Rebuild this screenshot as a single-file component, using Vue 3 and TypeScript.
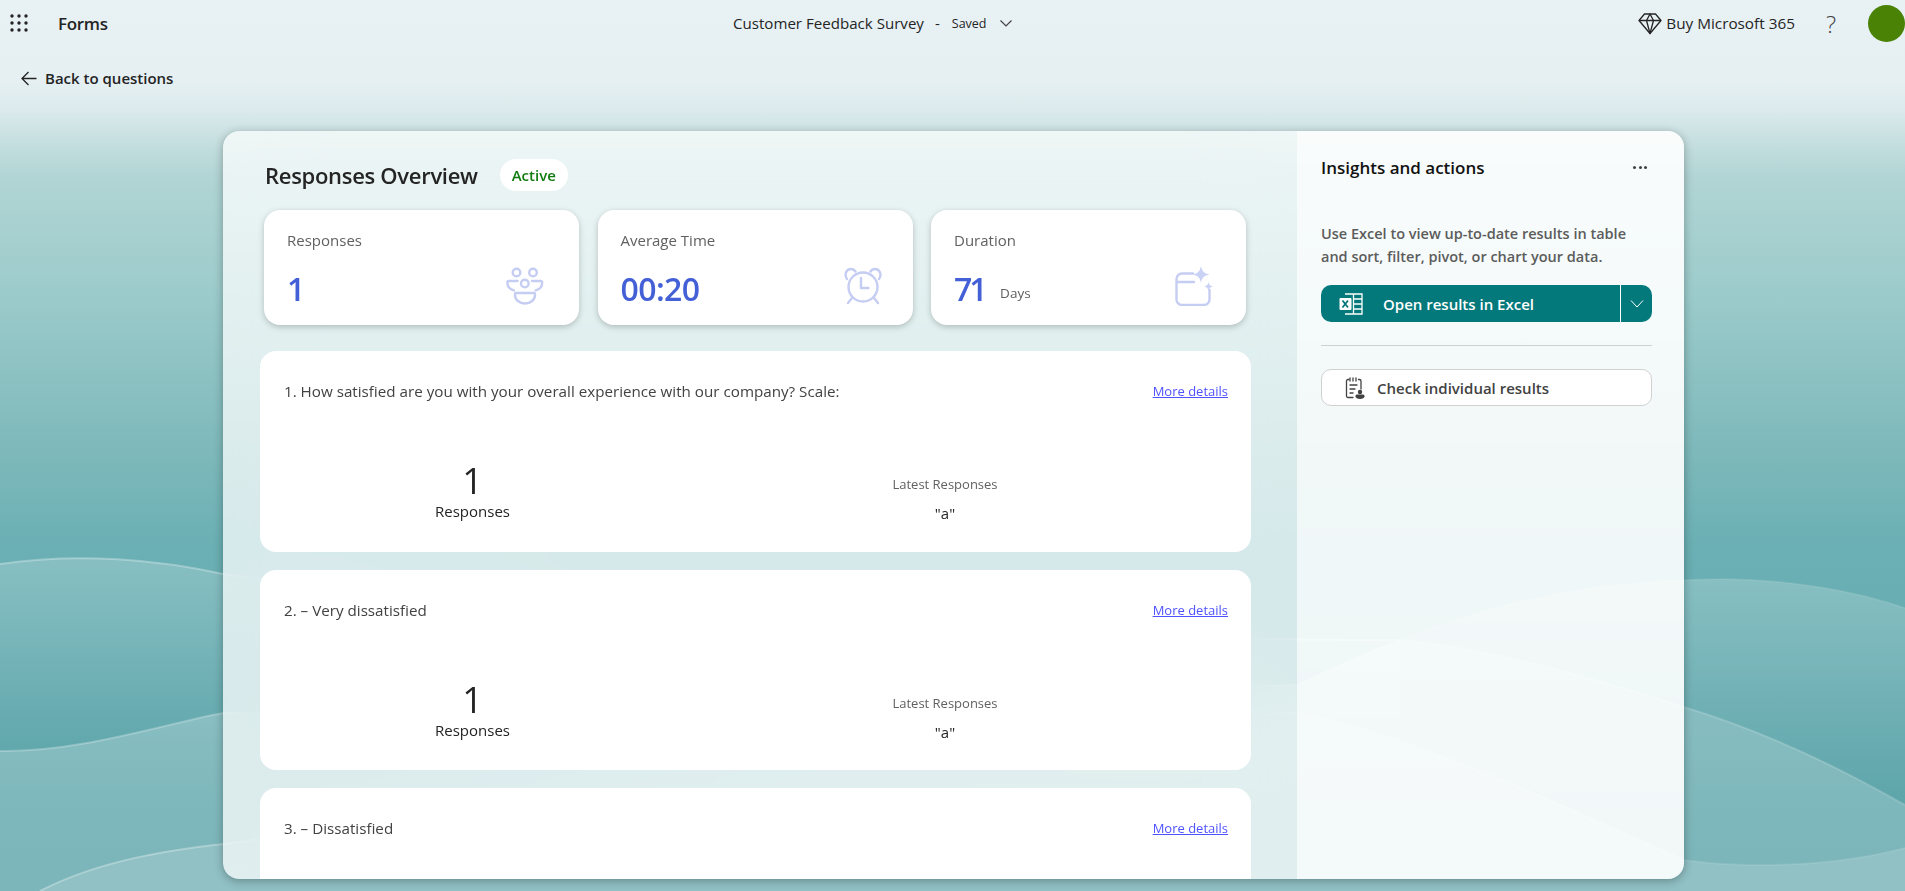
<template>
  <div class="page">
    <svg class="backdrop" viewBox="0 0 1905 891" preserveAspectRatio="none">
      <defs>
        <linearGradient id="base" x1="0" y1="0" x2="0" y2="891" gradientUnits="userSpaceOnUse">
          <stop offset="0" stop-color="#e8f1f4" />
          <stop offset="0.09" stop-color="#e6f0f3" />
          <stop offset="0.125" stop-color="#dbeaec" />
          <stop offset="0.155" stop-color="#c8e0e1" />
          <stop offset="0.2" stop-color="#b1d4d4" />
          <stop offset="0.33" stop-color="#9ccbcb" />
          <stop offset="0.5" stop-color="#7fb9bb" />
          <stop offset="0.61" stop-color="#6bb0b4" />
          <stop offset="0.9" stop-color="#5fa6ab" />
        </linearGradient>
        <linearGradient id="fadeLeft" x1="0" y1="555" x2="0" y2="745" gradientUnits="userSpaceOnUse">
          <stop offset="0" stop-color="#fff" stop-opacity="0.2" />
          <stop offset="1" stop-color="#fff" stop-opacity="0" />
        </linearGradient>
        <linearGradient id="fadeRight" x1="0" y1="579" x2="0" y2="790" gradientUnits="userSpaceOnUse">
          <stop offset="0" stop-color="#fff" stop-opacity="0.2" />
          <stop offset="1" stop-color="#fff" stop-opacity="0" />
        </linearGradient>
        <linearGradient id="fadeLow" x1="0" y1="650" x2="0" y2="860" gradientUnits="userSpaceOnUse">
          <stop offset="0" stop-color="#fff" stop-opacity="0.25" />
          <stop offset="1" stop-color="#fff" stop-opacity="0.18" />
        </linearGradient>
      </defs>
      <rect width="1905" height="891" fill="url(#base)" />
      <path d="M0 564C80 552 160 560 223 574C600 620 1100 640 1400 640L1400 891L0 891Z" fill="url(#fadeLeft)" />
      <path d="M1400 640C1500 600 1600 580 1722 579C1790 579 1860 592 1905 608L1905 805C1830 762 1760 730 1684 707C1600 680 1500 650 1400 640Z" fill="url(#fadeRight)" />
      <path d="M0 751C80 752 160 725 223 713C600 700 1000 690 1297 685C1340 665 1370 650 1400 640C1500 650 1600 680 1684 707C1760 730 1830 762 1905 805L1905 891L0 891Z" fill="url(#fadeLow)" />
      <path d="M40 891C100 860 170 850 223 844C600 800 1000 720 1297 713C1400 730 1550 800 1684 860C1740 868 1830 868 1905 848L1905 891Z" fill="#fff" fill-opacity="0.16" />
      <g fill="none" stroke="#fff" stroke-width="2">
        <path d="M0 564C80 552 160 560 223 574C600 620 1100 640 1400 640" stroke-opacity="0.3" />
        <path d="M1400 640C1500 650 1600 680 1684 707C1760 730 1830 762 1905 805" stroke-opacity="0.16" />
        <path d="M0 751C80 752 160 725 223 713C600 700 1000 690 1297 685" stroke-opacity="0.25" />
        <path d="M1297 685C1340 665 1370 650 1400 640C1500 600 1600 580 1722 579C1790 579 1860 592 1905 608" stroke-opacity="0.08" />
        <path d="M40 891C100 860 170 850 223 844C600 800 1000 720 1297 713" stroke-opacity="0.3" />
        <path d="M1297 713C1400 730 1550 800 1684 860C1740 868 1830 868 1905 848" stroke-opacity="0.1" />
      </g>
    </svg>

    <header class="topbar">
      <div class="brand">
        <svg class="waffle" width="18" height="18" viewBox="0 0 18 18" fill="#242424">
          <template v-for="row in 3" :key="row">
            <circle v-for="col in 3" :key="col" :cx="col * 7 - 5" :cy="row * 7 - 5" r="1.7" />
          </template>
        </svg>
        <span class="brand-name">Forms</span>
      </div>
      <div class="doc-title">
        <span class="doc-name">Customer Feedback Survey</span>
        <span class="doc-dash">-</span>
        <span class="doc-state">Saved</span>
        <svg width="14" height="10" viewBox="0 0 14 10" fill="none" stroke="#424242" stroke-width="1.2">
          <path d="M1.5 2.5 7 8l5.5-5.5" />
        </svg>
      </div>
      <div class="top-actions">
        <svg width="24" height="24" viewBox="0 0 24 24" fill="none" stroke="#242424" stroke-width="1.3" stroke-linejoin="round">
          <path d="M6.5 3h11L23 9.5 12 22.5 1 9.5Z" />
          <path d="M1 9.5h22M8.5 9.5 12 3l3.5 6.5L12 22.5Z" />
        </svg>
        <span class="buy">Buy Microsoft 365</span>
        <span class="help">?</span>
        <span class="avatar"></span>
      </div>
    </header>

    <div class="back-row">
      <svg width="16" height="15" viewBox="0 0 16 15" fill="none" stroke="#242424" stroke-width="1.3">
        <path d="M7.500 1 1 7.500 7.500 14M1 7.500h14.500" />
      </svg>
      <span>Back to questions</span>
    </div>

    <main class="sheet">
      <section class="overview">
        <div class="title-row">
          <h1>Responses Overview</h1>
          <span class="status">Active</span>
        </div>

        <div class="stats">
          <div v-for="stat in stats" :key="stat.label" class="stat">
            <div class="stat-label">{{ stat.label }}</div>
            <div class="stat-row">
              <span class="stat-value" :class="{ tight: stat.unit }">{{ stat.value }}</span>
              <span v-if="stat.unit" class="stat-unit">{{ stat.unit }}</span>
              <svg v-if="stat.icon === 'people'" class="stat-icon people" width="38" height="38" viewBox="0 0 38 38" fill="none" stroke="#c5cdf2" stroke-width="2.4" stroke-linecap="round">
                <circle cx="10.5" cy="5.5" r="3.8" />
                <circle cx="27" cy="5.5" r="3.8" />
                <circle cx="18.8" cy="16.5" r="3.8" />
                <path d="M11.5 14H3a1.6 1.6 0 0 0-1.6 1.6c0 4 2.6 7 6.6 7.8" />
                <path d="M26 14h8.6a1.6 1.6 0 0 1 1.6 1.6c0 4-2.6 7-6.6 7.8" />
                <path d="M10 26h18a1 1 0 0 1 1 1v1c0 4.600-4.400 8.500-10 8.500S9 32.600 9 28v-1a1 1 0 0 1 1-1Z" />
              </svg>
              <svg v-else-if="stat.icon === 'clock'" class="stat-icon clock" width="38" height="38" viewBox="0 0 38 38" fill="none" stroke="#c5cdf2" stroke-width="2.4" stroke-linecap="round" stroke-linejoin="round">
                <circle cx="19" cy="20" r="14.500" />
                <path d="M17 11v10h7.500" />
                <path d="M3 12C0 8 2 2 7 2c2 0 3.500 1 4.500 2.500" />
                <path d="M35 12c3-4 1-10-4-10-2 0-3.500 1-4.500 2.500" />
                <path d="M8 31l-4 5M30 31l4 5" />
              </svg>
              <svg v-else class="stat-icon" width="38" height="40" viewBox="0 0 38 40" fill="none" stroke="#c5cdf2" stroke-width="2.4" stroke-linecap="round" stroke-linejoin="round">
                <path d="M18 7.500H7A5.500 5.500 0 0 0 1.500 13v20.500A5.500 5.500 0 0 0 7 39h22a5.500 5.500 0 0 0 5.500-5.500V24" />
                <path d="M2 16h17" />
                <path d="M26 0c.9 5.200 3 7.400 8.500 8.500C29 9.600 26.900 11.800 26 17c-.9-5.200-3-7.400-8.500-8.500C23 7.400 25.100 5.200 26 0Z" fill="#c9d1f4" stroke="none" />
                <path d="M33.500 16c.5 2.700 1.500 3.800 4.500 4.500-3 .7-4 1.800-4.500 4.500-.5-2.700-1.500-3.800-4.500-4.500 3-.7 4-1.800 4.500-4.500Z" fill="#c9d1f4" stroke="none" />
              </svg>
            </div>
          </div>
        </div>

        <div class="questions">
          <article v-for="q in questions" :key="q.title" class="question">
            <div class="question-head">
              <span class="question-title">{{ q.title }}</span>
              <a class="more">More details</a>
            </div>
            <!-- the third card runs past the bottom of the sheet, only its heading shows -->
            <div v-if="q.answered" class="question-body">
              <div class="count">
                <div class="count-num">1</div>
                <div class="count-label">Responses</div>
              </div>
              <div class="latest">
                <div class="latest-label">Latest Responses</div>
                <div class="latest-value">"a"</div>
              </div>
            </div>
          </article>
        </div>
      </section>

      <aside class="insights">
        <div class="insights-head">
          <h2>Insights and actions</h2>
          <span class="dots"><i></i><i></i><i></i></span>
        </div>
        <p class="insights-text">Use Excel to view up-to-date results in table and sort, filter, pivot, or chart your data.</p>
        <div class="excel-btn">
          <div class="excel-main">
            <svg width="24" height="22" viewBox="0 0 24 22">
              <g fill="none" stroke="#fff" stroke-width="1.300">
                <path d="M6 1h17v20H6" />
                <path d="M14.500 1v20M14.500 6H23M14.500 11H23M14.500 16H23" />
              </g>
              <rect x="0.500" y="5" width="12" height="12" rx="1" fill="#fff" />
              <path d="m3.500 7.500 5.500 7M9 7.500l-5.500 7" stroke="#04797b" stroke-width="1.800" fill="none" />
            </svg>
            <span>Open results in Excel</span>
          </div>
          <div class="excel-more">
            <svg width="16" height="10" viewBox="0 0 16 10" fill="none" stroke="#fff" stroke-width="1">
              <path d="M2 1.500 8 8l6-6.500" />
            </svg>
          </div>
        </div>
        <hr class="rule" />
        <div class="check-btn">
          <svg width="20" height="22" viewBox="0 0 20 22" fill="none" stroke="#424242" stroke-width="1.300" stroke-linecap="round">
            <path d="M13.500 2.500h1A1.500 1.500 0 0 1 16 4v8M8 20.500H3A1.500 1.500 0 0 1 1.500 19V4A1.500 1.500 0 0 1 3 2.500h1" />
            <path d="M5 1v3M8 1v3M11 1v3" />
            <path d="M5 8h7M5 12h5M5 16h3" />
            <circle cx="15" cy="15" r="2.200" fill="#424242" stroke="none" />
            <path d="M10.500 19.200c0-1 .8-1.700 1.700-1.700h5.600c.900 0 1.700.7 1.700 1.700 0 1.800-2 2.800-4.500 2.800s-4.500-1-4.500-2.800Z" fill="#424242" stroke="none" />
          </svg>
          <span>Check individual results</span>
        </div>
      </aside>
    </main>
  </div>
</template>

<script setup lang="ts">
interface Stat {
  label: string;
  value: string;
  unit?: string;
  icon: 'people' | 'clock' | 'calendar';
}

const stats: Stat[] = [
  { label: 'Responses', value: '1', icon: 'people' },
  { label: 'Average Time', value: '00:20', icon: 'clock' },
  { label: 'Duration', value: '71', unit: 'Days', icon: 'calendar' },
];

const questions = [
  { title: '1. How satisfied are you with your overall experience with our company? Scale:', answered: true },
  { title: '2. – Very dissatisfied', answered: true },
  { title: '3. – Dissatisfied', answered: false },
];
</script>

<style>
html,
body {
  margin: 0;
  overflow: hidden;
}
</style>

<style scoped>
.page {
  position: relative;
  width: 1905px;
  height: 891px;
  overflow: hidden;
  font-family: "Open Sans", "Noto Sans", sans-serif;
  color: #242424;
}

.backdrop {
  position: absolute;
  top: 0;
  left: 0;
  width: 1905px;
  height: 891px;
}

.topbar {
  position: relative;
  display: grid;
  grid-template-columns: 733px auto 1fr;
  align-items: center;
  height: 46px;
}

.brand {
  display: flex;
  align-items: center;
  padding-left: 10px;
}

.brand-name {
  margin-left: 30px;
  font-size: 17px;
  font-weight: 600;
  letter-spacing: -0.3px;
}

.doc-title {
  display: flex;
  align-items: center;
  font-size: 15.100px;
  color: #242424;
}

.doc-dash {
  margin: 0 12px 0 11px;
}

.doc-state {
  margin-right: 12px;
  font-size: 12.500px;
}

.top-actions {
  display: flex;
  align-items: center;
  justify-content: flex-end;
}

.buy {
  margin-left: 4px;
  font-size: 15.300px;
}

.help {
  margin: 0 2px 0 31px;
  font-size: 24px;
  font-weight: 300;
  color: #424242;
}

.avatar {
  width: 37px;
  height: 37px;
  margin-left: 30px;
  border-radius: 50%;
  background: #498205;
}

.back-row {
  position: relative;
  display: flex;
  align-items: center;
  gap: 8px;
  height: 64px;
  padding-left: 21px;
  font-size: 15px;
  font-weight: 600;
}

.sheet {
  position: relative;
  display: flex;
  width: 1461px;
  height: 748px;
  margin: 21px 0 0 223px;
  overflow: hidden;
  border-radius: 16px;
  box-shadow: 0 2px 10px rgba(0, 0, 0, 0.3);
}

.overview {
  width: 1074px;
  overflow: hidden;
  background: rgba(255, 255, 255, 0.72);
  backdrop-filter: blur(40px);
}

.title-row {
  display: flex;
  align-items: center;
  gap: 22px;
  height: 32px;
  margin: 28px 0 19px 42px;
}

h1 {
  margin: 0;
  font-size: 22px;
  font-weight: 600;
  letter-spacing: -0.3px;
}

.status {
  padding: 0 12px;
  border-radius: 16px;
  background: #fff;
  color: #107c10;
  font-size: 15px;
  font-weight: 600;
  line-height: 32px;
}

.stats {
  display: flex;
  gap: 18.500px;
  margin: 0 0 26px 41px;
}

.stat {
  box-sizing: border-box;
  width: 315px;
  height: 115px;
  padding: 19px 33px 0 23px;
  border-radius: 16px;
  background: #fff;
  box-shadow: 0 2px 6px rgba(0, 0, 0, 0.22);
}

.stat-label {
  font-size: 15px;
  line-height: 22px;
  color: #616161;
}

.stat-row {
  display: flex;
  align-items: center;
  height: 44px;
  margin-top: 15px;
}

.stat-value {
  font-size: 32px;
  font-weight: 600;
  color: #4460d6;
  letter-spacing: -0.6px;
}

.stat-value.tight {
  letter-spacing: -3px;
}

.stat-unit {
  margin: 10px 0 0 15.500px;
  font-size: 13.500px;
  color: #616161;
}

.stat-icon {
  margin-top: -5px;
  margin-left: auto;
}

.stat-icon.people {
  margin-right: 2px;
}

.stat-icon.clock {
  margin-right: -2px;
}

.questions {
  display: flex;
  flex-direction: column;
  gap: 18px;
  width: 991px;
  margin-left: 37px;
}

.question {
  box-sizing: border-box;
  flex: none;
  height: 200.500px;
  padding: 29px 23px 0 24px;
  border-radius: 16px;
  background: #fff;
}

.question-head {
  display: flex;
  align-items: center;
  justify-content: space-between;
  height: 22px;
}

.question-title {
  font-size: 15.200px;
  color: #424242;
}

.more {
  font-size: 13px;
  color: #4f52ff;
  text-decoration: underline;
}

.question-body {
  display: grid;
  grid-template-columns: 377px 568px;
  margin-top: 54px;
  text-align: center;
}

.count-num {
  font-size: 36px;
  line-height: 50px;
  color: #242424;
}

.count-label {
  margin-top: -6px;
  font-size: 15px;
  line-height: 22px;
}

.latest {
  padding-top: 18px;
}

.latest-label {
  font-size: 13px;
  line-height: 20px;
  color: #616161;
}

.latest-value {
  margin-top: 8px;
  font-size: 15px;
  line-height: 22px;
}

.insights {
  flex: 1;
  box-sizing: border-box;
  padding: 23px 32px 0 24px;
  background: rgba(255, 255, 255, 0.9);
}

.insights-head {
  display: flex;
  align-items: center;
  justify-content: space-between;
  height: 26px;
}

h2 {
  margin: 0;
  font-size: 17px;
  font-weight: 600;
  color: #111;
}

.dots {
  display: flex;
  gap: 2.500px;
  margin-right: 5px;
}

.dots i {
  width: 3px;
  height: 3px;
  border-radius: 50%;
  background: #424242;
}

.insights-text {
  margin: 42px 0 17px;
  font-size: 14.500px;
  font-weight: 600;
  line-height: 23px;
  color: #5c5c5c;
}

.excel-btn {
  display: flex;
  height: 37px;
  overflow: hidden;
  border-radius: 10px;
  background: #04797b;
  color: #fff;
  font-size: 15px;
  font-weight: 600;
}

.excel-main {
  display: flex;
  align-items: center;
  gap: 20px;
  width: 300px;
  padding-left: 18px;
  box-sizing: border-box;
  border-right: 1px solid #fff;
}

.excel-more {
  display: flex;
  flex: 1;
  align-items: center;
  justify-content: center;
}

.rule {
  height: 1px;
  margin: 23px 0 23px;
  border: 0;
  background: #ccd1d3;
}

.check-btn {
  display: flex;
  align-items: center;
  gap: 12px;
  box-sizing: border-box;
  height: 37px;
  padding-left: 23px;
  border: 1px solid #d1d1d1;
  border-radius: 10px;
  background: #fff;
  color: #424242;
  font-size: 15px;
  font-weight: 600;
}
</style>
